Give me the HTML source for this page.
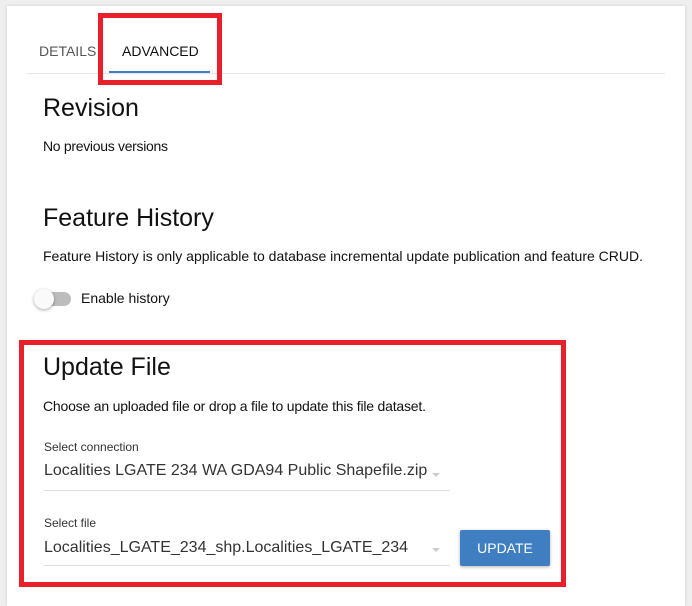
<!DOCTYPE html>
<html><head><style>
*{margin:0;padding:0;box-sizing:border-box}
body{width:692px;height:602px;background:#efefef;font-family:"Liberation Sans",sans-serif;position:relative;overflow:hidden;color:#111}
.card{position:absolute;left:7px;top:6px;width:678px;height:600px;background:#fff;box-shadow:0 0 3px rgba(0,0,0,.15)}
.a{position:absolute;white-space:nowrap}
.red{position:absolute;border:5px solid #e8202a}
</style></head><body>
<div class="card"></div>
<div class="a" style="left:39px;top:43px;font-size:14px;color:#555">DETAILS</div>
<div class="a" style="left:122px;top:43px;font-size:14px;color:#111">ADVANCED</div>
<div class="a" style="left:27px;top:73px;width:638px;height:1px;background:#e6e6e6"></div>
<div class="a" style="left:109px;top:71px;width:101px;height:2px;background:#3f7fc1"></div>
<div class="red" style="left:98px;top:13px;width:124px;height:72px"></div>
<div class="a" style="left:43px;top:94px;font-size:25px">Revision</div>
<div class="a" style="left:43px;top:138px;font-size:14px;letter-spacing:-0.3px">No previous versions</div>
<div class="a" style="left:43px;top:204px;font-size:25px">Feature History</div>
<div class="a" style="left:43px;top:248px;font-size:14px">Feature History is only applicable to database incremental update publication and feature CRUD.</div>
<div class="a" style="left:37px;top:292px;width:34px;height:14px;border-radius:7px;background:#bdbdbd"></div>
<div class="a" style="left:34px;top:289px;width:20px;height:20px;border-radius:50%;background:#fafafa;box-shadow:0 1px 3px rgba(0,0,0,.35)"></div>
<div class="a" style="left:81px;top:290px;font-size:14px">Enable history</div>
<div class="red" style="left:19px;top:340px;width:547px;height:247px"></div>
<div class="a" style="left:43px;top:353px;font-size:25px">Update File</div>
<div class="a" style="left:43px;top:398px;font-size:14px;letter-spacing:-0.2px">Choose an uploaded file or drop a file to update this file dataset.</div>
<div class="a" style="left:44px;top:440px;font-size:12px;color:#333">Select connection</div>
<div class="a" style="left:44px;top:462px;font-size:16px;color:#333">Localities LGATE 234 WA GDA94 Public Shapefile.zip</div>
<div class="a" style="left:432px;top:473px;border:4px solid transparent;border-top:4px solid #ccc"></div>
<div class="a" style="left:44px;top:490px;width:406px;height:1px;background:#ddd"></div>
<div class="a" style="left:44px;top:516px;font-size:12px;color:#333">Select file</div>
<div class="a" style="left:44px;top:539px;font-size:16px;color:#333">Localities_LGATE_234_shp.Localities_LGATE_234</div>
<div class="a" style="left:432px;top:548px;border:4px solid transparent;border-top:4px solid #ccc"></div>
<div class="a" style="left:44px;top:565px;width:406px;height:1px;background:#ddd"></div>
<div class="a" style="left:460px;top:530px;width:90px;height:36px;background:#3f7fc1;border-radius:2px;box-shadow:0 1px 3px rgba(0,0,0,.3);color:#fff;font-size:14px;text-align:center;line-height:36px">UPDATE</div>
</body></html>
